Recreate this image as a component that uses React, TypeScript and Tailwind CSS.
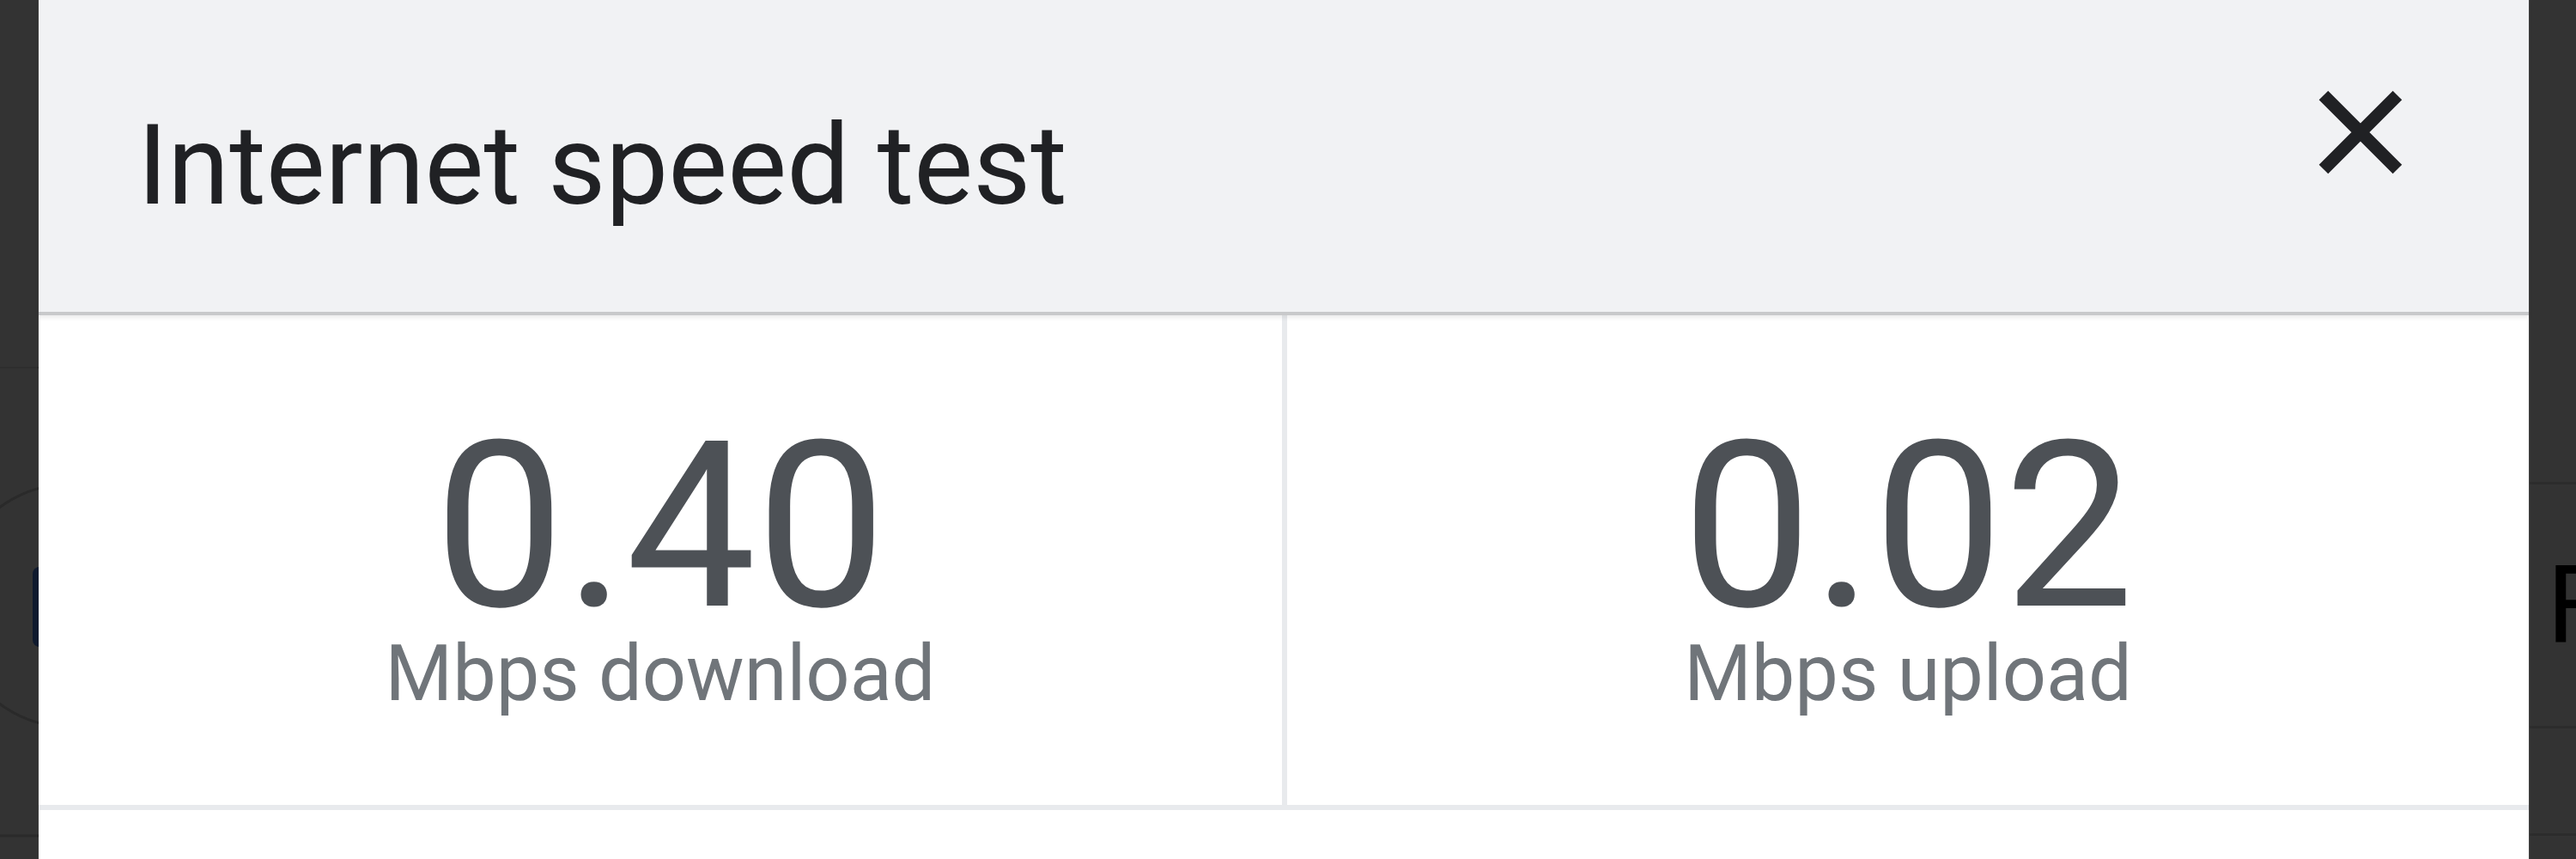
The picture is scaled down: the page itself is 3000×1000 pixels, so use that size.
import { ReactNode } from 'react';

const font = { fontFamily: 'Roboto, "Noto Sans", Arial, sans-serif' };

function CloseIcon() {
  return (
    <svg width="102" height="102" viewBox="0 0 102 102" className="shrink-0 mt-[103px] mr-[145px]">
      <path d="M8 8L94 94M94 8L8 94" stroke="#202124" strokeWidth="15" strokeLinecap="butt" fill="none" />
    </svg>
  );
}

function Stat({ value, label, children }: { value: string; label: string; children?: ReactNode }) {
  return (
    <div className="flex flex-col items-center pt-[126px] h-full">
      <div className="text-[270px] leading-[240px] text-[#4d5156]">{value}</div>
      <div className="text-[90px] leading-[90px] text-[#70757a] mt-[7px]">{label}</div>
      {children}
    </div>
  );
}

export default function App() {
  return (
    <div className="w-[3000px] h-[1000px] bg-[#333333] flex overflow-hidden" style={font}>
      {/* page behind the dialog, left edge */}
      <div className="w-[45px] h-full shrink-0 border-r border-[#3e3e3e]">
        <svg width="45" height="1000" viewBox="0 0 45 1000">
          <line x1="0" y1="428" x2="45" y2="428" stroke="#2e2e2e" strokeWidth="2" />
          <circle cx="84" cy="705" r="142" fill="none" stroke="#2a2a2a" strokeWidth="3" />
          <rect x="38" y="660" width="20" height="93" rx="8" fill="#0f1a2e" />
          <line x1="0" y1="973" x2="45" y2="973" stroke="#2a2a2a" strokeWidth="3" />
        </svg>
      </div>

      <div className="w-[2900px] h-full shrink-0 bg-white flex flex-col">
        <div className="h-[367px] shrink-0 bg-[#f1f2f4] border-b-4 border-[#c8c9cb] shadow-[0_3px_5px_rgba(0,0,0,0.08)] relative z-10 flex justify-between">
          <h1 className="pl-[115px] pt-[128px] text-[130px] leading-none font-normal text-[#202124]">
            Internet speed test
          </h1>
          <CloseIcon />
        </div>

        <div className="h-[576px] shrink-0 flex border-b-[6px] border-[#e8eaed]">
          <div className="w-[1454px] shrink-0 border-r-[6px] border-[#e8eaed]">
            <Stat value="0.40" label="Mbps download" />
          </div>
          <div className="flex-1">
            <Stat value="0.02" label="Mbps upload" />
          </div>
        </div>

        <div className="flex-1 bg-white" />
      </div>

      {/* page behind the dialog, right edge */}
      <div className="flex-1 h-full flex flex-col border-l border-[#444444]">
        <div className="h-[564px] border-b-[3px] border-[#2c2c2c]" />
        <div className="h-[284px] border-b-[3px] border-[#2c2c2c] flex items-center pl-[20px]">
          <span className="text-[126px] leading-none text-black">F</span>
        </div>
        <div className="h-[125px] border-b-[3px] border-[#2c2c2c]" />
        <div className="flex-1" />
      </div>
    </div>
  );
}
